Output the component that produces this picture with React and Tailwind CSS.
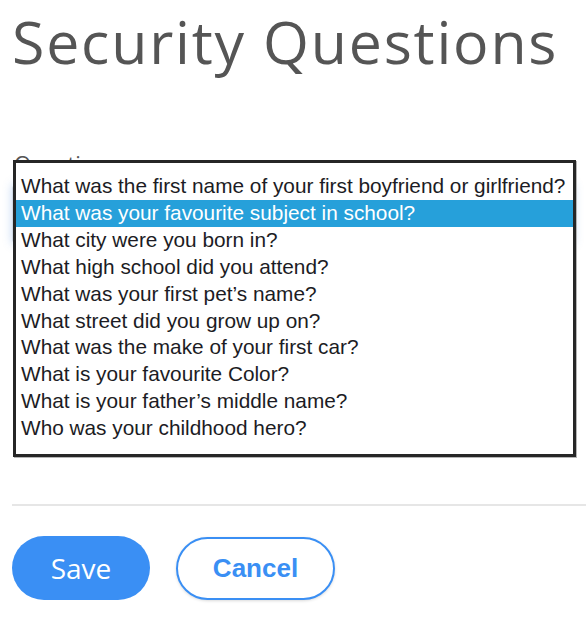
import { useState } from 'react';

const QUESTIONS = [
  'What was the first name of your first boyfriend or girlfriend?',
  'What was your favourite subject in school?',
  'What city were you born in?',
  'What high school did you attend?',
  'What was your first pet’s name?',
  'What street did you grow up on?',
  'What was the make of your first car?',
  'What is your favourite Color?',
  'What is your father’s middle name?',
  'Who was your childhood hero?',
];

export default function App() {
  const [selected, setSelected] = useState(1);

  return (
    <div className="min-h-screen bg-white px-[12px] overflow-hidden">
      <h1 className="mt-[12px] text-[59px] leading-none tracking-[1.8px] text-[#555555] font-['Open_Sans',sans-serif] font-normal whitespace-nowrap">
        Security Questions
      </h1>

      {/* Question field with the open list over it */}
      <div className="relative mt-[77px]">
        <label className="block pl-[2px] text-[22px] leading-[30px] text-[#555555] font-['Open_Sans',sans-serif]">
          Question
        </label>
        <div className="mt-[6px] h-[60px] rounded-[4px] border border-[#cfd8e3] shadow-[0_0_10px_rgba(80,140,220,0.35)]" />
        <div className="h-[254px]" />

        <ul className="absolute left-[1px] top-[12px] z-10 w-[563px] h-[297px] bg-white border-[3px] border-[#262626] shadow-[1px_1px_0_#b5b5b5] pt-[10px] font-['Liberation_Sans',Arial,sans-serif] text-[20.8px] leading-[26.9px]">
          {QUESTIONS.map((q, i) => (
            <li
              key={q}
              onMouseEnter={() => setSelected(i)}
              className={`px-[5px] whitespace-nowrap cursor-default ${
                i === selected ? 'bg-[#26a0da] text-white' : 'text-[#1c1c24]'
              }`}
            >
              {q}
            </li>
          ))}
        </ul>
      </div>

      <div className="mt-[6px] -mr-[12px] h-[2px] bg-[#e6e6e6]" />

      <div className="mt-[30px] flex items-center gap-[26px]">
        <button className="w-[138px] h-[64px] rounded-full bg-[#3a8ff4] text-white text-[28px] font-['Open_Sans',sans-serif] font-medium">
          Save
        </button>
        <button className="w-[159px] h-[63px] rounded-full bg-white border-2 border-[#3a8ff4] text-[#3a8ff4] text-[26px] font-bold font-['Liberation_Sans',Arial,sans-serif] shadow-[0_1px_3px_rgba(0,0,0,0.15)]">
          Cancel
        </button>
      </div>
    </div>
  );
}
